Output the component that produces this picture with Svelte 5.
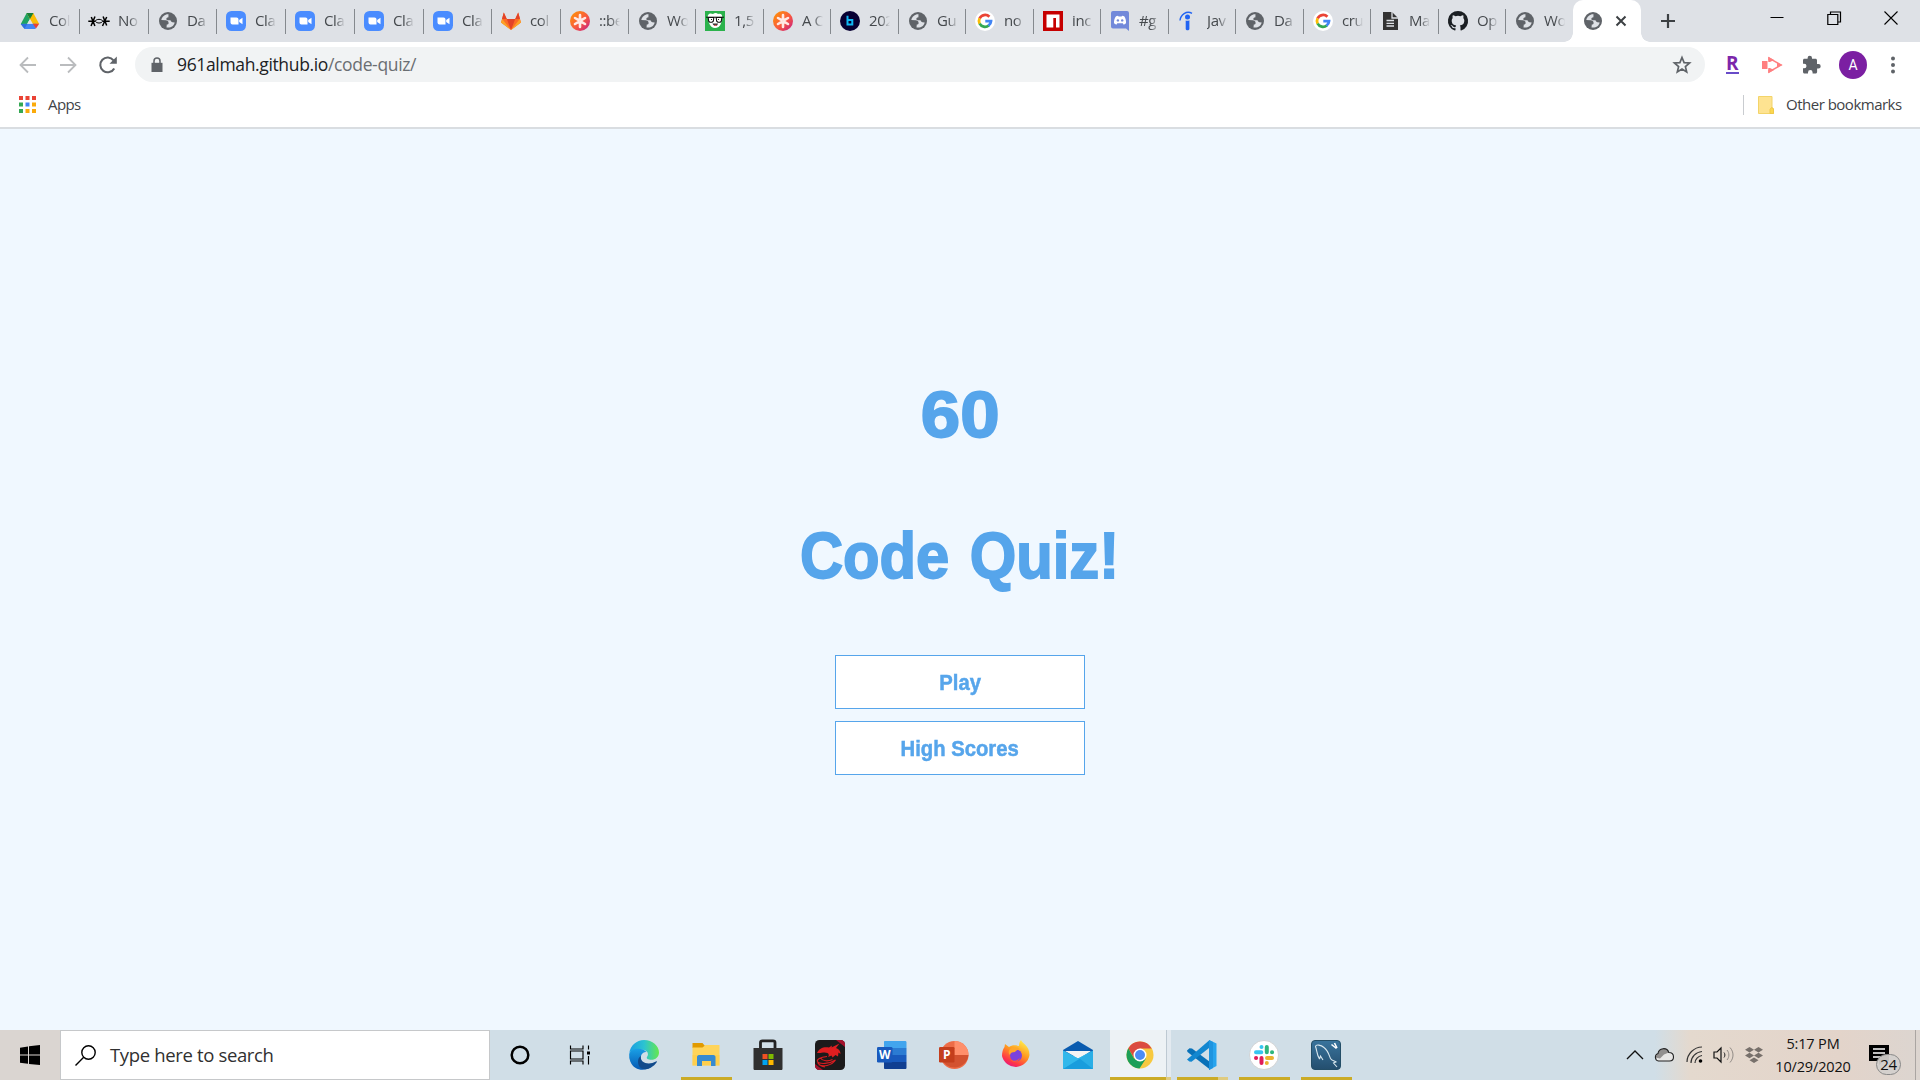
<script>
  const tabs = [
    { icon: 'drive', title: 'Col', width: 69 },
    { icon: 'stars', title: 'No', width: 69 },
    { icon: 'globe', title: 'Da', width: 68 },
    { icon: 'zoom', title: 'Cla', width: 69 },
    { icon: 'zoom', title: 'Cla', width: 69 },
    { icon: 'zoom', title: 'Cla', width: 69 },
    { icon: 'zoom', title: 'Cla', width: 68 },
    { icon: 'gitlab', title: 'col', width: 69 },
    { icon: 'aster', title: '::be', width: 68 },
    { icon: 'globe', title: 'Wo', width: 67 },
    { icon: 'face', title: '1,5', width: 68 },
    { icon: 'aster', title: 'A C', width: 67 },
    { icon: 'b', title: '202', width: 68 },
    { icon: 'globe', title: 'Gu', width: 67 },
    { icon: 'google', title: 'no', width: 68 },
    { icon: 'npm', title: 'inc', width: 67 },
    { icon: 'discord', title: '#g', width: 68 },
    { icon: 'indeed', title: 'Jav', width: 67 },
    { icon: 'globe', title: 'Da', width: 68 },
    { icon: 'google', title: 'cru', width: 67 },
    { icon: 'doc', title: 'Ma', width: 68 },
    { icon: 'github', title: 'Op', width: 67 },
    { icon: 'globe', title: 'Wo', width: 67 }
  ];

  const apps = [
    { icon: 'edge' },
    { icon: 'explorer', state: 'open' },
    { icon: 'store' },
    { icon: 'dragon' },
    { icon: 'word' },
    { icon: 'powerpoint' },
    { icon: 'firefox' },
    { icon: 'mail' },
    { icon: 'chrome', state: 'focused' },
    { icon: 'vscode', state: 'stacked' },
    { icon: 'slack', state: 'open' },
    { icon: 'mysql', state: 'open' }
  ];
</script>

{#snippet favicon(name)}
  <svg class="favicon" viewBox="0 0 20 20">
    {#if name === 'drive'}
      <path d="M6.700 2L10 8l-5.500 9.500L.8 13z" fill="#1ea362" />
      <path d="M6.700 2h6.600L19.200 13h-6.700z" fill="#fbbc04" />
      <path d="M6.500 2h7L10 8z" fill="#188038" />
      <path d="M4 12.800h12.500L15.500 18h-11L.8 13z" fill="#4285f4" />
      <path d="M.8 13h6.500L4.500 17.500z" fill="#2f6fdd" />
      <path d="M12.800 12.800h6.400L16 17.500z" fill="#ea4335" />
      <path d="M10 8l2.800 4.800H7.200z" fill="#dee1e6" />
    {:else if name === 'stars'}
      <g stroke="#000" stroke-width="1.500" fill="none">
        <path d="M-.7 10.300H6.500M2.300 6l3.600 9M6 5.500L2 15M13.500 10.300h7.200M14.100 5.500l3.600 9M17.700 6L13.500 15" />
        <path d="M6 10.300c1.500-2.600 6.500-2.600 8 0M6.500 10.500c1.500 2 5.500 2 7 0" stroke-width="1" />
      </g>
    {:else if name === 'globe'}
      <circle cx="10" cy="10" r="9" fill="#5f6368" />
      <path d="M10.500 3.200C7 3 4 5.500 3.300 9l4.500.3c1.500.2 2.800 1 2.800 2.600 0 1-.7 1.600-1.800 1.600l-.3 2.900c4 .9 7.500-1.500 8.200-5l-2.200-.2c-1-.3-1.700-1-2-2H9.700c-1 0-1.500-.8-1.300-1.700.3-1 1.200-.9 2-1.200z" fill="#dee1e6" />
    {:else if name === 'zoom'}
      <rect width="20" height="20" rx="5.500" fill="#4a8cff" />
      <path d="M4.500 6.500h6a2 2 0 0 1 2 2v5h-6a2 2 0 0 1-2-2zM13.200 9l3.300-2.300v6.600L13.200 11z" fill="#fff" />
    {:else if name === 'gitlab'}
      <path d="M10 19L0 11.500 2.800 1.500l3 6.500h8.400l3-6.500L20 11.500z" fill="#fc6d26" />
      <path d="M10 19L5.800 8h8.400z" fill="#e24329" />
      <path d="M10 19L0 11.500 1.200 8zM10 19l10-7.500L18.800 8z" fill="#fca326" />
      <path d="M1 8l1.800-6.500 3 6.500zM19 8l-1.800-6.500-3 6.500z" fill="#e24329" />
    {:else if name === 'aster'}
      <defs><linearGradient id="warm" x2="1" y2="1"><stop stop-color="#ff9a00" /><stop offset=".55" stop-color="#f9593e" /><stop offset="1" stop-color="#c2188a" /></linearGradient></defs>
      <circle cx="10" cy="10" r="10" fill="url(#warm)" />
      <path d="M10 8.500V4M10 11.500V16M8.700 9.200L5 7M11.300 10.800L15 13M11.300 9.200L15 7M8.700 10.800L5 13" stroke="#ffe9e5" stroke-width="2.600" stroke-linecap="round" />
    {:else if name === 'face'}
      <rect width="20" height="20" fill="#2bb24c" />
      <path d="M3 7C2 3 5 1.500 8 3c2-1.500 4-1 5 0 3-1 5 1 4 4l-1 5.500c-1 3-3.500 4.500-6 4.500s-5-2-6-5z" fill="#fff" />
      <path d="M1 6.200h18" stroke="#111" stroke-width="1" />
      <path d="M3.200 6.500h5.600l-.5 3.700-1.200 1H4.700l-1-1zM11.200 6.500h5.600l-.5 3.700-1 1h-2.400l-1.200-1z" fill="#fff" stroke="#111" stroke-width="1.100" />
      <path d="M6 8h1v1H6zM13 8h1v1h-1z" fill="#222" />
      <path d="M7.500 12.500h5.500c-.3 1.700-1.300 2.500-2.500 2.500s-2.500-1-3-2.500z" fill="#333" />
      <path d="M9.500 13.800h2V15h-2z" fill="#e55" />
    {:else if name === 'b'}
      <circle cx="10" cy="10" r="10" fill="#080033" />
      <path d="M7.500 4.800v8.700h4.800V9H7.500" fill="none" stroke="#10b8f5" stroke-width="2" />
    {:else if name === 'google'}
      <circle cx="10" cy="10" r="10" fill="#fff" />
      <g fill="none" stroke-width="2.800">
        <path d="M14.400 5.800A6 6 0 0 0 4.600 7.500" stroke="#ea4335" />
        <path d="M4.600 7.300a6 6 0 0 0 0 5.400" stroke="#fbbc05" />
        <path d="M4.600 12.500a6 6 0 0 0 9.200 2" stroke="#34a853" />
        <path d="M13.500 14.700A6 6 0 0 0 16 10.200H10.300" stroke="#4285f4" />
      </g>
    {:else if name === 'npm'}
      <path d="M0 0h20v20H0z" fill="#c60000" /><path d="M3.500 3.500h13v13H13V7h-2.700v9.500H3.500z" fill="#fff" />
    {:else if name === 'discord'}
      <path d="M3 0h14a2 2 0 0 1 2 2v18l-3-2.500H3a2 2 0 0 1-2-2V2a2 2 0 0 1 2-2z" fill="#7289da" />
      <path d="M6 5.200l2-.5.600.8h3l.600-.8 2 .5c1.400 2 2 4.300 1.800 7l-2.200 1.600-1-1.500H7.300l-1 1.500L4 12.200c-.1-2.700.5-5 2-7z" fill="#fff" />
      <circle cx="7.900" cy="9.400" r="1.200" fill="#7289da" /><circle cx="12.200" cy="9.400" r="1.200" fill="#7289da" />
    {:else if name === 'indeed'}
      <circle cx="9.500" cy="6" r="2.500" fill="#2164f3" />
      <path d="M7.700 9.500c1.200.6 2.600.4 3.700-.3V18c-.2 1.700-3.500 1.700-3.700 0z" fill="#2164f3" />
      <path d="M2 9.500C2.500 4 8.500-.8 14 2.400" fill="none" stroke="#2164f3" stroke-width="1.400" />
    {:else if name === 'doc'}
      <path d="M3 1h9l6 6v12H3z" fill="#333" /><path d="M12 1v6h6M6.500 9.500H14M6.500 12.300H14M6.500 15H14" fill="none" stroke="#dee1e6" stroke-width="1.300" />
    {:else if name === 'github'}
      <path d="M10 0a10 10 0 0 0-3.200 19.500c.5.100.7-.2.700-.5v-1.800c-2.800.6-3.400-1.200-3.400-1.200-.5-1.100-1.100-1.400-1.100-1.400-.9-.6.1-.6.100-.6 1 .1 1.500 1 1.500 1 .9 1.600 2.400 1.100 3 .9.100-.7.400-1.100.6-1.400-2.200-.2-4.500-1.100-4.500-4.900 0-1.100.4-2 1-2.700-.1-.3-.4-1.300.1-2.700 0 0 .8-.3 2.700 1a9.500 9.500 0 0 1 5 0c1.900-1.300 2.700-1 2.700-1 .5 1.400.2 2.400.1 2.700.6.700 1 1.600 1 2.700 0 3.800-2.300 4.700-4.500 4.900.4.300.7 1 .7 1.900V19c0 .3.200.6.700.5A10 10 0 0 0 10 0z" fill="#1b1f23" />
    {/if}
  </svg>
{/snippet}

{#snippet appIcon(name)}
  <svg class="app-icon" viewBox="0 0 30 30">
    {#if name === 'edge'}
      <defs>
        <linearGradient id="edgeTop"><stop stop-color="#1b9de2" /><stop offset=".5" stop-color="#2bc3d2" /><stop offset="1" stop-color="#66e84d" /></linearGradient>
        <linearGradient id="edgeSide" x2="0" y2="1"><stop stop-color="#1aa0e6" /><stop offset="1" stop-color="#0659b3" /></linearGradient>
      </defs>
      <path d="M.3 13C1.500 5.500 7.500 0 15 0c8.500 0 15 6 15 12.500 0 4.500-3.500 7.300-7.500 7.300-3.500 0-5.500-1.300-4.500-2.800 3-4-1-7.500-6-7.500C6 9.500 2 11 .3 13z" fill="url(#edgeTop)" />
      <path d="M.2 14C2 7.500 14 7 17.500 12c-3-.6-6.500 2.500-5.500 7 1 4.500 5.500 8.500 10.500 8C16 31.500 5 31 1.300 21.500A16 16 0 0 1 .2 14z" fill="url(#edgeSide)" />
      <path d="M11.900 16c-1.500 7 8 9.500 15 5.500 1-.5 1.200.2.800.8C22 31 9.500 32 9 22c0-3 1-5 2.900-6z" fill="#114a8b" />
    {:else if name === 'explorer'}
      <path d="M1.500 3h10l2.500 3v2H1.500z" fill="#e19a00" />
      <path d="M1.500 7.500h10l3-2.500h14v20.500h-27z" fill="#ffd45a" />
      <path d="M1.500 15h27v10.500h-27z" fill="#ffcb45" opacity=".6" />
      <path d="M6 26V17c0-1 .8-2 2-2h14.500c1.200 0 2 1 2 2v9H20v-5h-9v5z" fill="#378bd1" />
    {:else if name === 'store'}
      <path d="M7.500 9V2.500C7.500 1 8.500.8 9.500.8h10.500c1.500 0 2 .7 2 1.700V9" fill="none" stroke="#222" stroke-width="2.800" />
      <path d="M.5 8h29v20.500c0 1-.5 1.500-1.500 1.500H2c-1 0-1.500-.5-1.500-1.500z" fill="#303030" />
      <path d="M9.500 14h5v5h-5z" fill="#f25022" /><path d="M15.500 14h5v5h-5z" fill="#7fba00" />
      <path d="M9.500 20h5v5h-5z" fill="#00a4ef" /><path d="M15.500 20h5v5h-5z" fill="#ffb900" />
    {:else if name === 'dragon'}
      <rect width="30" height="30" rx="4.500" fill="#1c1a1b" />
      <path d="M21 0h5c2 0 4 2 4 4v3zM0 24l8 6H4c-2 0-4-2-4-4z" fill="#a5122d" />
      <path d="M2 13C4 8 9 6.500 14 7.500L17 5.500l-.5 2 8-4-3.500 4.500c3 1 4.500 3 4.500 6l-2-1.500-.5 4-2.500-1.500-3 2.500-1-2-3.500 1.500c1.200-1.500 1-3-.5-4-3.500-1.500-7 .5-9.500 0z" fill="#df1e20" />
      <path d="M12 16.500c-7 .5-10.500 3-9.500 5 2 3 12 2.500 18-1.500-4 6-13 7-17 4.500M5.500 18c2 3.500 8 3.500 12 1.500M10 27c-4-.5-6-2-7.500-4.500" fill="none" stroke="#d81c20" stroke-width="1.100" />
    {:else if name === 'word'}
      <path d="M8 1h20c1 0 1.500.5 1.500 1.500V8H7V2c0-.6.400-1 1-1z" fill="#41a5ee" /><path d="M7 8h22.500v7H7z" fill="#2b7cd3" /><path d="M7 15h22.500v7H7z" fill="#185abd" /><path d="M7 22h22.500v5.500c0 1-.5 1.500-1.500 1.500H8c-.6 0-1-.5-1-1z" fill="#103f91" />
      <rect y="7" width="15.500" height="15.500" rx="1.300" fill="#185abd" /><text x="7.800" y="18.500" text-anchor="middle" class="letter">W</text>
    {:else if name === 'powerpoint'}
      <circle cx="15.500" cy="15" r="14" fill="#ed6c47" /><path d="M15.500 1a14 14 0 0 1 14 14h-14z" fill="#ff8f6b" /><path d="M2 15h27.500a14 14 0 0 1-27.500 2z" fill="#d35230" />
      <rect y="7" width="15.500" height="15.500" rx="1.300" fill="#c43e1c" /><text x="7.800" y="18.800" text-anchor="middle" class="letter">P</text>
    {:else if name === 'firefox'}
      <defs><linearGradient id="fox" x1=".8" x2=".25" y2="1"><stop stop-color="#fff44f" /><stop offset=".45" stop-color="#ff9a1f" /><stop offset=".8" stop-color="#ff3647" /><stop offset="1" stop-color="#e31587" /></linearGradient></defs>
      <path d="M18 6c0-3 1-5 2-6 .5 3 8.500 5 8.500 15A14 14 0 0 1 1 16c0-4 1-7 2.500-9L4 4l4 3c3-2 6-2 10-1z" fill="url(#fox)" />
      <circle cx="15" cy="15.500" r="6" fill="#7b42dd" /><path d="M9 9c4-3 9-2 10 1-3-.5-4 .5-5 2-3 0-5 1-5 3-2-2-1.500-4 0-6z" fill="#ffa62a" /><path d="M9 19c3 3 7 2 10-1-1 4-8 6-10 1z" fill="#ff5a35" />
    {:else if name === 'mail'}
      <path d="M0 10L15 1l15 9v6H0z" fill="#0a5baf" /><path d="M2 11h26L16 19z" fill="#f4f4f4" />
      <path d="M0 10.500l15 8 15-8V29H0z" fill="#2aaee6" /><path d="M0 29l16-11 14 11z" fill="#199ddd" /><path d="M30 10.500L0 29V10.500L15 18.500z" fill="#32b8eb" />
    {:else if name === 'chrome'}
      <circle cx="15" cy="15" r="13.500" fill="#f7c93f" />
      <path d="M3.300 8.200A13.500 13.500 0 0 1 26.700 8.500H15L9 18z" fill="#db4b40" />
      <path d="M3.300 8.200A13.500 13.500 0 0 0 14.500 28.500L21 18.500H9z" fill="#1c9f58" />
      <circle cx="15" cy="15" r="6.500" fill="#fff" /><circle cx="15" cy="15" r="5" fill="#4b8cf5" />
    {:else if name === 'vscode'}
      <path d="M22 0l7.500 3.500v22.500L22 30z" fill="#28a4ee" />
      <path d="M0 10.500l2.500-2.300 2.500.3L23 22v7.500L.5 12z" fill="#0871b8" /><path d="M0 19.500L22 .5V8L4.500 21.800l-2.200-.2z" fill="#1287d0" /><path d="M22 0l4 2v26l-4 2z" fill="#1f94df" />
    {:else if name === 'slack'}
      <circle cx="15" cy="15" r="14.500" fill="#fff" stroke="#c7c7c7" stroke-width=".7" />
      <g stroke-width="4" stroke-linecap="round"><path d="M12.500 7v.1M7 12.200h5.300" stroke="#36c5f0" /><path d="M17.800 7v5.200M23 12.200h.1" stroke="#2eb67d" /><path d="M7 17.900h.1M12.500 18v5" stroke="#e01e5a" /><path d="M18 17.900h5M17.800 23v.1" stroke="#ecb22e" /></g>
    {:else if name === 'mysql'}
      <defs><linearGradient id="sea" x2="0" y2="1"><stop stop-color="#39749d" /><stop offset="1" stop-color="#244e6e" /></linearGradient></defs>
      <rect x=".5" y=".5" width="29" height="29" rx="3.500" fill="url(#sea)" stroke="#244e67" />
      <path d="M8.500 19C5.500 14 6 10 4.500 6.500 5 4 10 5 13 7.500c4 3 5 7.500 6.500 11 1 2 4 2.500 5.500 3.500l-2.500 1 3.500 4M8.500 19l1-3 2.500 4" fill="none" stroke="#d9e8ef" stroke-width="1.100" />
      <path d="M20.500 4.500l5 4M23.500 3l2.500 5" stroke="#fff" stroke-width="1.600" />
    {/if}
  </svg>
{/snippet}

<div class="screen">
  <header class="tabstrip">
    {#each tabs as tab, i}
      <div class="tab" class:last={i === tabs.length - 1} style:width="{tab.width}px">
        {@render favicon(tab.icon)}
        <span class="tab-title">{tab.title}</span>
      </div>
    {/each}
    <div class="tab-active">
      {@render favicon('globe')}
      <svg class="tab-close" viewBox="0 0 12 12"><path d="M1.500 1.500l9 9m0-9l-9 9" stroke="#3c4043" stroke-width="2" /></svg>
    </div>
    <svg class="new-tab" viewBox="0 0 16 16"><path d="M8 1v14M1 8h14" stroke="#3c4043" stroke-width="2.200" /></svg>
    <div class="window-buttons">
      <svg viewBox="0 0 14 14"><path d="M.5 6.500h13" stroke="#000" /></svg>
      <svg viewBox="0 0 14 14"><path d="M.8 3.500h10v10h-10zM3.500 3.500V1h10v10H11" fill="none" stroke="#000" stroke-width="1.200" /></svg>
      <svg viewBox="0 0 14 14"><path d="M.5.500l13 13m0-13l-13 13" stroke="#000" stroke-width="1.100" /></svg>
    </div>
  </header>

  <div class="toolbar">
    <svg class="nav" viewBox="0 0 20 20"><path d="M18 10H3m7-7.500L2.500 10l7.500 7.500" fill="none" stroke="#babcbe" stroke-width="1.800" /></svg>
    <svg class="nav" viewBox="0 0 20 20"><path d="M2 10h15m-7-7.500l7.500 7.500-7.500 7.500" fill="none" stroke="#babcbe" stroke-width="1.800" /></svg>
    <svg class="nav" viewBox="0 0 20 20"><path d="M16.200 13.400A7.400 7.400 0 1 1 15.500 5.300" fill="none" stroke="#5f6368" stroke-width="2.100" /><path d="M18.800 1.500v7.300h-7.300z" fill="#5f6368" /></svg>
    <div class="omnibox">
      <svg class="lock" viewBox="0 0 12 16"><path d="M.5 5.800h11V15H.5z" fill="#5f6368" /><path d="M3 6.500V4a3 3 0 0 1 6 0v2.500" fill="none" stroke="#5f6368" stroke-width="1.500" /></svg>
      <span class="url">961almah.github.io<span>/code-quiz/</span></span>
      <svg class="star" viewBox="0 0 20 20"><path d="M10 2.500l2.100 5.100 5.500.4-4.200 3.600 1.300 5.400L10 14.100 5.300 17l1.300-5.400L2.400 8l5.500-.4z" fill="none" stroke="#5f6368" stroke-width="1.700" /></svg>
    </div>
    <div class="extensions">
      <span class="rakuten">R</span>
      <svg viewBox="0 0 20 20"><path d="M0 6h5.500v8H0z" fill="#ff7f80" /><path d="M7 5.500V3l12 7-12 7v-2.500" fill="none" stroke="#ff7f80" stroke-width="1.500" /><path d="M6.300 1.800L12 5l-4 2H6.300zM6.300 18.200L12 15l-4-2H6.300zM15 7.300l5.500 2.700-5.500 2.800z" fill="#ff7f80" /></svg>
      <svg viewBox="0 0 20 20"><path d="M16.500 9H15V5.300c0-.8-.7-1.500-1.500-1.500H10V3a2.200 2.200 0 0 0-4.400 0v.8H2.400C1.600 3.800 1 4.500 1 5.300v3.400h1.200a2.300 2.300 0 0 1 0 4.600H1v3.800c0 .8.700 1.500 1.500 1.500H6v-1.200a2.300 2.300 0 0 1 4.600 0v1.200h3c.8 0 1.500-.7 1.500-1.500v-3.700h1.400a2.200 2.200 0 0 0 0-4.400z" fill="#5f6368" /></svg>
      <span class="avatar">A</span>
      <svg viewBox="0 0 20 20"><g fill="#5f6368"><circle cx="10" cy="3.500" r="2" /><circle cx="10" cy="10" r="2" /><circle cx="10" cy="16.500" r="2" /></g></svg>
    </div>
  </div>

  <div class="bookmarks">
    <svg class="apps-grid" viewBox="0 0 17 17">
      <path d="M0 0h4v4H0zM6.500 0h4v4h-4zM13 0h4v4h-4z" fill="#ea4335" />
      <path d="M0 6.500h4v4H0zM0 13h4v4H0z" fill="#34a853" /><path d="M6.500 6.500h4v4h-4z" fill="#4285f4" />
      <path d="M13 6.500h4v4h-4zM6.500 13h4v4h-4zM13 13h4v4h-4z" fill="#fbab0a" />
    </svg>
    <span class="apps-label">Apps</span>
    <span class="divider"></span>
    <svg class="folder" viewBox="0 0 16 18"><path d="M.5.500h13.500v11l1.500 1v5H.5z" fill="#fee391" stroke="#f3d469" /><path d="M12 17.500v-4l1.500-2 2 1.500v4.500z" fill="#fcd84f" stroke="#efc84a" /></svg>
    <span class="other-label">Other bookmarks</span>
  </div>

  <main>
    <h1 class="timer"><span>60</span></h1>
    <h1 class="heading"><span>Code Quiz!</span></h1>
    <button><span>Play</span></button>
    <button><span>High Scores</span></button>
  </main>

  <footer>
    <div class="start"><svg viewBox="0 0 20 20"><path d="M0 2.700L8 1.500v8H0zM9 1.300L20 0v9.500H9zM0 10.500h8v8.300L0 17.700zM9 10.500h11V20L9 18.900z" /></svg></div>
    <div class="search">
      <svg viewBox="0 0 21 21"><circle cx="13.500" cy="7.500" r="6.700" fill="none" stroke="#000" stroke-width="1.400" /><path d="M8.700 12.300L.5 20.500" stroke="#000" stroke-width="1.400" /></svg>
      <span>Type here to search</span>
    </div>
    <div class="system-button"><svg viewBox="0 0 20 20"><circle cx="10" cy="10" r="8.300" fill="none" stroke="#000" stroke-width="2.500" /></svg></div>
    <div class="system-button"><svg viewBox="0 0 20 20"><path d="M.5.500v3.500h12.500V.5M.5 19.500V16h12.500v3.500M.5 6h12.500v8H.5zM18.500.5v4M18.500 11v8.500" fill="none" stroke="#000" stroke-width="1.150" /><path d="M17 6.500h3v3h-3z" /></svg></div>
    <div class="apps">
      {#each apps as app}
        <div class="app {app.state ?? ''}">{@render appIcon(app.icon)}</div>
      {/each}
    </div>
    <div class="tray">
      <svg class="chevron" viewBox="0 0 18 18"><path d="M1 13l8-8 8 8" fill="none" stroke="#111" stroke-width="1.300" /></svg>
      <svg class="cloud" viewBox="0 0 20 16"><path d="M4.500 14A3.900 3.900 0 0 1 4 6.500C5 .5 13 0 14.800 5.500c3 0 4.700 2 4.700 4.500 0 2.300-1.500 4-4 4z" fill="#e8e7e6" /><path d="M4 6.500C5 .5 13 0 14.800 5.500l-4.800 2-4 4L1 10.500z" fill="#92908f" /><path d="M4.500 14A3.900 3.900 0 0 1 4 6.500C5 .5 13 0 14.800 5.500c3 0 4.700 2 4.700 4.500 0 2.300-1.500 4-4 4z" fill="none" stroke="#222" stroke-width="1.100" /></svg>
      <svg class="wifi" viewBox="0 0 18 18"><path d="M1 16C1 8 8 1 16 1M5 17c0-6 5-11 11-11.500M9 17c0-3.500 3-7 7-7.500" fill="none" stroke="#333" stroke-width="1.200" /><circle cx="14.500" cy="15" r="1.800" /></svg>
      <svg class="volume" viewBox="0 0 22 18"><path d="M1 6h3l4-4v14l-4-4H1z" fill="none" stroke="#111" stroke-width="1.200" /><path d="M11 6.500c1.200 1.500 1.200 3.500 0 5" fill="none" stroke="#222" /><path d="M14 4c2.500 3 2.500 7 0 10M17 1.500c4 4.500 4 10.500 0 15" fill="none" stroke="#918b86" /></svg>
      <svg class="dropbox" viewBox="0 0 20 18"><path d="M5.500 1L10 3.800 5.500 6.600 1 3.800zM14.500 1L19 3.800l-4.500 2.800L10 3.800zM5.500 6.700L10 9.500l-4.500 2.800L1 9.500zM14.500 6.700L19 9.500l-4.500 2.800L10 9.500zM10 11.500l4.500 2.800L10 17l-4.500-2.700z" fill="#77706b" /></svg>
      <div class="clock"><span>5:17 PM</span><span>10/29/2020</span></div>
      <div class="notifications">
        <svg viewBox="0 0 20 20"><path d="M0 0h20v16h-5l-5 4v-4H0z" /><path d="M4 4h12M4 8h12M4 12h8" stroke="#fff" stroke-width="1.300" /></svg>
        <span class="badge">24</span>
      </div>
    </div>
  </footer>
</div>

<style>
  :global(body) { margin: 0; overflow: hidden; }
  .screen { width: 1920px; height: 1080px; display: flex; flex-direction: column; font-family: 'Open Sans', 'Noto Sans', sans-serif; background: #fff; }
  svg { display: block; flex: none; overflow: visible; }

  .tabstrip { display: flex; height: 42px; padding-left: 11px; box-sizing: border-box; background: #dee1e6; }
  .tab { display: flex; align-items: center; box-sizing: border-box; padding-left: 9px; gap: 9px; flex: none; background: linear-gradient(#85898e, #85898e) right 9px / 1px 25px no-repeat; }
  .tab.last { background: none; }
  .favicon { width: 20px; height: 20px; }
  .tab-title { width: 22px; padding-bottom: 2px; white-space: nowrap; font-size: 15px; letter-spacing: -0.4px; line-height: 20px; color: #45494d; mask-image: linear-gradient(90deg, #000 50%, transparent 96%); }
  .tab-active { position: relative; display: flex; align-items: center; gap: 12px; width: 68px; padding-left: 10px; box-sizing: border-box; background: #fff; border-radius: 10px 10px 0 0; flex: none; }
  .tab-active::before, .tab-active::after { content: ''; position: absolute; bottom: 0; width: 9px; height: 9px; }
  .tab-active::before { left: -9px; background: radial-gradient(circle at 0 0, transparent 8.500px, #fff 9px); }
  .tab-active::after { right: -9px; background: radial-gradient(circle at 100% 0, transparent 8.500px, #fff 9px); }
  .tab-close { width: 12px; height: 12px; }
  .new-tab { width: 16px; height: 16px; margin: 13px 0 0 19px; }
  .window-buttons { display: flex; gap: 43px; margin: 11px 22px 0 auto; }
  .window-buttons svg { width: 14px; height: 14px; }

  .toolbar { display: flex; align-items: center; height: 45px; padding-left: 18px; }
  .nav { width: 20px; height: 20px; margin-right: 20px; }
  .omnibox { display: flex; align-items: center; width: 1570px; height: 35px; margin-left: -3px; padding: 0 13px 0 16px; box-sizing: border-box; border-radius: 18px; background: #f1f3f4; }
  .lock { width: 12px; height: 16px; }
  .url { margin-left: 14px; padding-bottom: 2px; font-size: 17.500px; letter-spacing: -0.35px; color: #202124; }
  .url span { color: #6a6e72; }
  .star { width: 20px; height: 20px; margin-left: auto; }
  .extensions { display: flex; align-items: center; gap: 20px; margin-left: 17px; }
  .extensions svg { width: 20px; height: 20px; }
  .rakuten { width: 13px; height: 17px; margin: 0 3px 0 4px; border-bottom: 2px solid #684bc8; color: #7c26aa; font: bold 19px/17px 'Open Sans', sans-serif; }
  .avatar { width: 28px; height: 28px; margin: 0 -4px 0 -3px; border-radius: 50%; background: #7b1fa2; color: #fff; font: 14px/28px Roboto, sans-serif; text-align: center; }

  .bookmarks { display: flex; align-items: center; height: 42px; padding: 0 18px 5px 19px; box-sizing: border-box; border-bottom: 2px solid #d9dde1; font-size: 15px; color: #3f4347; }
  .apps-grid { width: 17px; height: 17px; }
  .apps-label { margin-left: 12px; padding-bottom: 2px; letter-spacing: -0.6px; }
  .divider { width: 1px; height: 20px; margin-left: auto; background: #c9ccd0; }
  .folder { width: 16px; height: 18px; margin: 0 12px 0 14px; }
  .other-label { width: 116px; padding-bottom: 2px; letter-spacing: -0.5px; white-space: nowrap; }

  main { flex: 1; display: flex; flex-direction: column; align-items: center; background: #f0f8ff; color: #56a5eb; font-family: 'Liberation Sans', Arial, sans-serif; font-weight: bold; }
  h1 { margin: 0; font-size: 65px; line-height: 76px; white-space: nowrap; -webkit-text-stroke: 1.800px #56a5eb; }
  h1 span, button span { display: inline-block; }
  .timer { margin-top: 248px; }
  .timer span { transform: scaleX(1.09); }
  .heading { margin-top: 65px; }
  .heading span { transform: scaleX(0.92); word-spacing: 4px; }
  main button { width: 250px; height: 54px; box-sizing: border-box; margin: 0 0 12px; padding: 0; border: 1px solid #56a5eb; background: #fff; color: #56a5eb; font: bold 22.500px/53px 'Liberation Sans', Arial, sans-serif; -webkit-text-stroke: 0.5px #56a5eb; }
  .heading + button { margin-top: 61px; }
  main button span { transform: scaleX(0.9); }

  footer { display: flex; height: 50px; flex: none; background: linear-gradient(90deg, #d0dee7 0, #d0dee7 1655px, #e4d9ce 1690px, #e3d4ca 1840px, #dcd5d0 1920px); }
  .start { display: flex; align-items: center; justify-content: center; width: 60px; background: #dad5d1; }
  .start svg { width: 20px; height: 20px; }
  .search { display: flex; align-items: center; gap: 14px; width: 430px; box-sizing: border-box; padding-left: 14px; border: 1px solid #c6c8ca; background: #fff; color: #303030; font-size: 18.500px; letter-spacing: -0.35px; }
  .search svg { width: 21px; height: 21px; }
  .search span { padding-bottom: 2px; }
  .system-button { display: flex; align-items: center; justify-content: center; width: 60px; }
  .system-button svg { width: 20px; height: 20px; }
  .apps { display: flex; margin-left: 3px; }
  .app { display: flex; align-items: center; justify-content: center; width: 62px; }
  .app-icon { width: 30px; height: 30px; }
  .letter { fill: #fff; font: bold 12px 'Open Sans', sans-serif; }
  .open { background: linear-gradient(#cbab26, #cbab26) 6px 100% / 51px 3px no-repeat; }
  .focused { background: linear-gradient(90deg, transparent 1px, #cbab26 1px, #cbab26 57px, #dfcb80 57px) 0 100% / 62px 3px no-repeat, linear-gradient(90deg, transparent 1px, #edf2f5 1px, #edf2f5 57px, #bdc9d2 57px, #bdc9d2 58px, #e3eaf0 58px); }
  .stacked { background: linear-gradient(90deg, #cbab26 41px, #dfcb80 41px) 6px 100% / 51px 3px no-repeat; }
  .tray { display: flex; align-items: center; margin-left: auto; margin-right: 4px; padding-right: 26px; border-right: 1px solid #aaa5a2; }
  .chevron { width: 18px; height: 18px; margin-right: 10px; }
  .cloud { width: 20px; height: 16px; margin-right: 12px; }
  .wifi { width: 18px; height: 18px; margin-right: 9px; }
  .volume { width: 22px; height: 18px; margin-right: 9px; }
  .dropbox { width: 20px; height: 18px; margin-right: 11px; }
  .clock { display: flex; flex-direction: column; align-items: center; width: 76px; font-size: 14.500px; line-height: 23px; letter-spacing: -0.15px; color: #111; white-space: nowrap; margin-right: 18px; }
  .notifications { position: relative; margin-top: -1px; }
  .notifications svg { width: 20px; height: 20px; }
  .badge { position: absolute; left: 7px; top: 9px; width: 23px; height: 19px; border: 1px solid #888; border-radius: 11px; background: #d3d0cdee; color: #111; font-size: 15px; line-height: 19px; letter-spacing: -0.3px; text-align: center; }
</style>
